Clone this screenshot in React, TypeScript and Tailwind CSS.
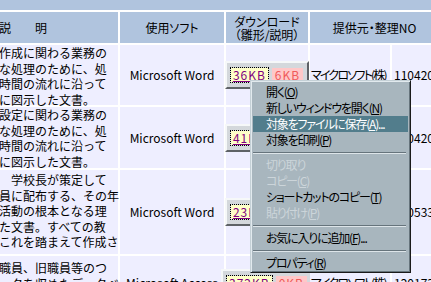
import { ReactNode } from "react";

type Row = {
	lines: string[];
	soft: string;
	big: string;
	small: string;
	maker: string;
	no: string;
	h: string;
	pt: string;
};

const rows: Row[] = [
	{
		lines: ["作成に関わる業務の", "な処理のために、処", "時間の流れに沿って", "に図示した文書。"],
		soft: "Microsoft Word",
		big: "36KB",
		small: "6KB",
		maker: "マイクロソフト(株)",
		no: "1104201",
		h: "h-[60px]",
		pt: "pt-0",
	},
	{
		lines: ["設定に関わる業務の", "な処理のために、処", "時間の流れに沿って", "に図示した文書。"],
		soft: "Microsoft Word",
		big: "41KB",
		small: "7KB",
		maker: "マイクロソフト(株)",
		no: "1104202",
		h: "h-[61px]",
		pt: "pt-0",
	},
	{
		lines: ["　学校長が策定して", "員に配布する、その年", "活動の根本となる理", "た文書。すべての教", "これを踏まえて作成さ"],
		soft: "Microsoft Word",
		big: "23KB",
		small: "5KB",
		maker: "マイクロソフト(株)",
		no: "1105331",
		h: "h-[84px]",
		pt: "pt-[2px]",
	},
	{
		lines: ["職員、旧職員等のつ", "ータを収めたデータベ"],
		soft: "Microsoft Access",
		big: "372KB",
		small: "0KB",
		maker: "マイクロソフト(株)",
		no: "1201731",
		h: "h-[54px]",
		pt: "pt-[4px]",
	},
];

function MenuItem({ children, active, disabled }: { children: ReactNode; active?: boolean; disabled?: boolean }) {
	return (
		<div
			className={
				active
					? "h-[16px] flex items-center pl-[13px] bg-[#527d8c] text-white"
					: disabled
						? "h-[16px] flex items-center pl-[13px] text-[#ccd5da]"
						: "h-[16px] flex items-center pl-[13px] text-black"
			}
		>
			{children}
		</div>
	);
}

function Separator() {
	return (
		<div className="h-[9px] flex flex-col justify-center pr-[2px]">
			<div className="h-px bg-[#66747c]" />
			<div className="h-px bg-[#dde5e9]" />
		</div>
	);
}

function App() {
	return (
		<div className="relative w-[431px] h-[282px] overflow-hidden bg-white text-[12px] text-black font-['Noto_Sans_CJK_JP',sans-serif]">
			<div className="flex flex-col gap-[2px] ml-[-72px] w-[560px]">
				<div className="h-[10px] bg-[#b0c4de]" />
				<div className="flex gap-[2px] h-[31px]">
					<div className="w-[190px] bg-[#b0c4de] flex items-center justify-center">説　　明</div>
					<div className="w-[104px] bg-[#b0c4de] flex items-center justify-center [font-feature-settings:'palt']">
						使用ソフト
					</div>
					<div className="w-[82px] bg-[#b0c4de] flex flex-col items-center justify-center leading-[13px] [font-feature-settings:'palt']">
						<span>ダウンロード</span>
						<span>（雛形/説明）</span>
					</div>
					<div className="w-[129px] bg-[#b0c4de] flex items-center justify-center [font-feature-settings:'palt']">
						提供元・整理NO
					</div>
				</div>
				{rows.map((r) => (
					<div key={r.no} className={`flex gap-[2px] ${r.h}`}>
						<div className={`w-[190px] bg-[#eeeeff] pl-[71px] flex flex-col leading-[15.5px] whitespace-nowrap ${r.pt}`}>
							{r.lines.map((l) => (
								<span key={l}>{l}</span>
							))}
						</div>
						<div className="w-[104px] bg-[#eeeeff] flex items-center justify-center">{r.soft}</div>
						<div className="w-[82px] bg-[#eeeeff] flex items-center justify-center">
							<div className="flex items-center gap-[4px] h-[28px] px-[4px] bg-[#d4d8dc] border-2 border-t-[#f6f8f9] border-l-[#f6f8f9] border-r-[#5e6266] border-b-[#5e6266]">
								<span className="bg-[#ffffc8] px-[2px] leading-[14px] tracking-[1px] text-[#800080] underline outline-1 outline-dotted outline-black">
									{r.big}
								</span>
								<span className="bg-[#ffc8c8] px-[3px] leading-[14px] tracking-[1px] text-[#f05a5a]">{r.small}</span>
							</div>
						</div>
						<div className="w-[80px] bg-[#eeeeff] flex items-center pl-[1px] whitespace-nowrap tracking-[-1.8px] [font-feature-settings:'palt']">
							{r.maker}
						</div>
						<div className="w-[47px] bg-[#eeeeff] flex items-center pl-[2px] whitespace-nowrap">{r.no}</div>
					</div>
				))}
			</div>

			<div className="absolute left-[250px] top-[80px] w-[161px] bg-[#a8b6be] border border-t-[#c4d0d6] border-l-[#c4d0d6] border-r-[#1a1a1a] border-b-[#1a1a1a] shadow-[inset_1px_1px_0_#e2eaee,inset_-1px_-1px_0_#66747c] px-[2px] pt-[3px] pb-[1px] whitespace-nowrap tracking-[-1.2px] [font-feature-settings:'palt']">
				<MenuItem>
					開く(<u>O</u>)
				</MenuItem>
				<MenuItem>
					新しいウィンドウを開く(<u>N</u>)
				</MenuItem>
				<MenuItem active>
					対象をファイルに保存(<u>A</u>)...
				</MenuItem>
				<MenuItem>
					対象を印刷(<u>P</u>)
				</MenuItem>
				<Separator />
				<MenuItem disabled>切り取り</MenuItem>
				<MenuItem disabled>
					コピー(<u>C</u>)
				</MenuItem>
				<MenuItem>
					ショートカットのコピー(<u>T</u>)
				</MenuItem>
				<MenuItem disabled>
					貼り付け(<u>P</u>)
				</MenuItem>
				<Separator />
				<MenuItem>
					お気に入りに追加(<u>F</u>)...
				</MenuItem>
				<Separator />
				<MenuItem>
					プロパティ(<u>R</u>)
				</MenuItem>
			</div>
		</div>
	);
}

export default App;
